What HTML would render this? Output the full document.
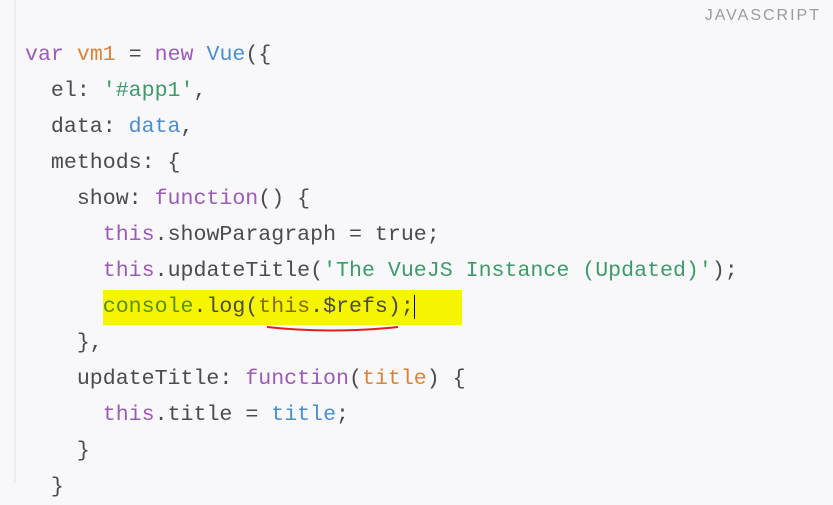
<!DOCTYPE html><html><head><style>
html,body{margin:0;width:833px;height:483px;overflow:hidden;background:#f8f8fa;}
.b{position:absolute;left:14px;top:0;width:2px;height:483px;background:#ececef}
.lbl{position:absolute;right:12px;top:7px;font:16px "Liberation Sans",sans-serif;letter-spacing:2px;color:#9a9aa2}
pre{position:absolute;left:25px;top:37px;margin:0;font:21.6px/36px "Liberation Mono",monospace;color:#4a4a4f}
.k{color:#9b5cb4}.o{color:#d9843a}.g{color:#3e9a6a}.bl{color:#4a8ed0}
.hl{background:#f5f500;padding:5px 8px 6px 0}
.hl .c{color:#5a8f1a}.hl .t{color:#8a6a10}
</style></head><body>
<div class="b"></div><div class="lbl">JAVASCRIPT</div>
<pre><span class="k">var</span> <span class="o">vm1</span> = <span class="k">new</span> <span class="bl">Vue</span>({
  el: <span class="g">'#app1'</span>,
  data: <span class="bl">data</span>,
  methods: {
    show: <span class="k">function</span>() {
      <span class="k">this</span>.showParagraph = <span>true</span>;
      <span class="k">this</span>.updateTitle(<span class="g">'The VueJS Instance (Updated)'</span>);
      <span class="hl"><span class="c">console</span>.log(<span class="t">this</span>.$refs);<span style="border-left:1px solid #000"></span>   </span>
    },
    updateTitle: <span class="k">function</span>(<span class="o">title</span>) {
      <span class="k">this</span>.title = <span class="bl">title</span>;
    }
  }</pre>
<svg style="position:absolute;left:0;top:0" width="833" height="483"><path d="M267 327 Q330 334 398 327" stroke="#e02020" stroke-width="2" fill="none"/></svg>
</body></html>
